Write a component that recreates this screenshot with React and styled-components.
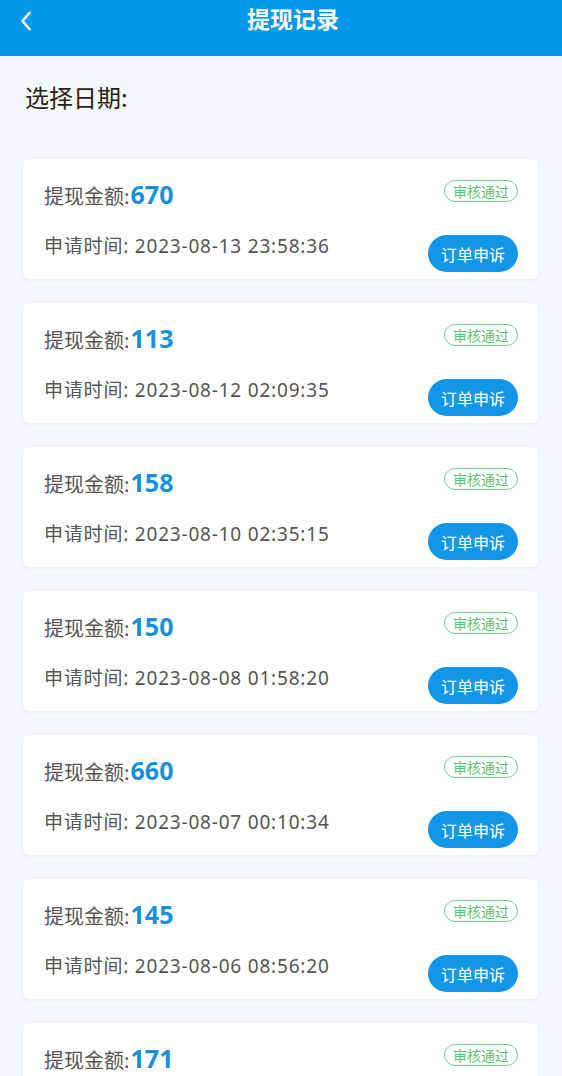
import React from 'react';
import styled, { createGlobalStyle } from 'styled-components';

const GlobalStyle = createGlobalStyle`
    html, body {
        margin: 0;
        padding: 0;
        background: #f2f8fc;
        font-family: 'Noto Sans', 'Noto Sans CJK SC', sans-serif;
    }
`;

const Page = styled.div`
    width: 562px;
    height: 1076px;
    background: #f2f8fc;
    overflow: hidden;
`;

const Header = styled.div`
    height: 56px;
    background: #0598e9;
    position: relative;
    display: flex;
    justify-content: center;
`;

const BackButton = styled.div`
    position: absolute;
    left: 18px;
    top: 10px;
    width: 16px;
    height: 22px;
    display: flex;
    align-items: center;
    justify-content: center;
`;

const Title = styled.div`
    color: #fff;
    font-size: 23px;
    font-weight: 700;
    line-height: 36px;
    padding-left: 24px;
    font-family: 'Noto Sans CJK SC', sans-serif;
`;

const DateLabel = styled.div`
    padding: 25px 0 0 25px;
    height: 76px;
    box-sizing: border-box;
    font-size: 24px;
    line-height: 32px;
    color: #2b1d14;
    font-family: 'Noto Sans CJK SC', sans-serif;
`;

const List = styled.div`
    display: flex;
    flex-direction: column;
    gap: 24px;
    padding: 27px 24px 0 23px;
`;

const Card = styled.div`
    background: #fff;
    border-radius: 6px;
    box-shadow: 0 1px 3px rgba(140, 170, 200, 0.18);
    padding: 18px 20px 7px 21px;
    height: 120px;
    box-sizing: border-box;
    flex-shrink: 0;
`;

const TopRow = styled.div`
    display: flex;
    justify-content: space-between;
    align-items: center;
    height: 34px;
`;

const Amount = styled.div`
    display: flex;
    align-items: baseline;
    font-size: 20px;
    color: #555;
    font-family: 'Noto Sans CJK SC', sans-serif;
`;

const AmountValue = styled.span`
    color: #1890dc;
    font-size: 25px;
    font-weight: 700;
    font-family: 'Noto Sans', sans-serif;
    margin-left: 1px;
`;

const Badge = styled.span`
    border: 1.5px solid #72cf84;
    border-radius: 12px;
    color: #5cc272;
    font-size: 14px;
    line-height: 20px;
    padding: 0 8px;
    margin-top: -6px;
    font-family: 'Noto Sans CJK SC', sans-serif;
`;

const BottomRow = styled.div`
    display: flex;
    justify-content: space-between;
    align-items: flex-start;
    margin-top: 24px;
`;

const Time = styled.div`
    font-size: 19px;
    line-height: 22px;
    letter-spacing: 0.8px;
    color: #555;
    font-family: 'Noto Sans', 'Noto Sans CJK SC', sans-serif;
`;

const AppealButton = styled.button`
    width: 90px;
    height: 37px;
    border: none;
    border-radius: 19px;
    background: #1296e6;
    color: #fff;
    font-size: 16px;
    font-weight: 400;
    font-family: 'Noto Sans CJK SC', sans-serif;
    padding: 0;
`;

const records = [
    { amount: 670, time: '2023-08-13 23:58:36' },
    { amount: 113, time: '2023-08-12 02:09:35' },
    { amount: 158, time: '2023-08-10 02:35:15' },
    { amount: 150, time: '2023-08-08 01:58:20' },
    { amount: 660, time: '2023-08-07 00:10:34' },
    { amount: 145, time: '2023-08-06 08:56:20' },
    { amount: 171, time: '2023-08-05 10:21:44' },
];

export default function App() {
    return (
        <Page>
            <GlobalStyle />
            <Header>
                <BackButton>
                    <svg width="12" height="20" viewBox="0 0 12 20">
                        <path d="M9.5 2 L2.5 10 L9.5 18" fill="none" stroke="#fff" strokeWidth="2.6" strokeLinecap="round" strokeLinejoin="round" />
                    </svg>
                </BackButton>
                <Title>提现记录</Title>
            </Header>
            <DateLabel>选择日期:</DateLabel>
            <List>
                {records.map((r, i) => (
                    <Card key={i}>
                        <TopRow>
                            <Amount>
                                提现金额:<AmountValue>{r.amount}</AmountValue>
                            </Amount>
                            <Badge>审核通过</Badge>
                        </TopRow>
                        <BottomRow>
                            <Time>申请时间: {r.time}</Time>
                            <AppealButton>订单申诉</AppealButton>
                        </BottomRow>
                    </Card>
                ))}
            </List>
        </Page>
    );
}
